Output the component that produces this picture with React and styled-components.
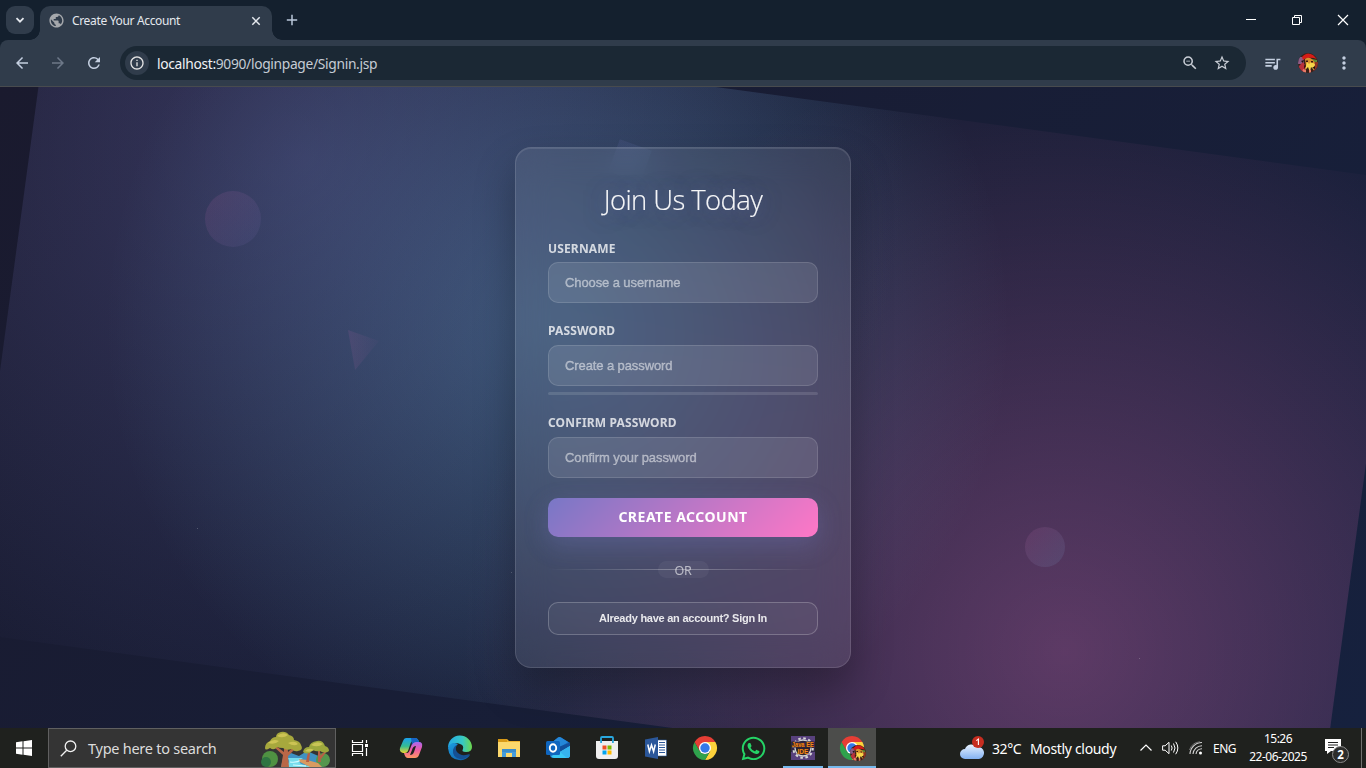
import React from 'react';
import styled, { createGlobalStyle } from 'styled-components';
import { MdArrowBack, MdArrowForward, MdRefresh, MdZoomOut, MdStarBorder, MdQueueMusic, MdMoreVert, MdPublic, MdInfoOutline } from 'react-icons/md';
import { FaWhatsapp } from 'react-icons/fa';

const Global = createGlobalStyle`
  * { box-sizing: border-box; }
  body { margin: 0; overflow: hidden; background: #1a1a2e; }
  svg { display: block; flex: none; overflow: visible; }
`;

const ui = `'Noto Sans', 'Open Sans', sans-serif`;

const Screen = styled.div`
  width: 1366px;
  height: 768px;
  display: flex;
  flex-direction: column;
  font-family: ${ui};
`;

/* ---------- browser ---------- */
const TabStrip = styled.div`
  height: 40px;
  background: #14202e;
  display: flex;
  align-items: center;
  padding-left: 6px;
`;
const TabSearch = styled.div`
  width: 28px;
  height: 28px;
  border-radius: 9px;
  background: #303c4b;
  display: grid;
  place-items: center;
`;
const Tab = styled.div`
  position: relative;
  align-self: flex-end;
  width: 232px;
  height: 34px;
  margin-left: 6px;
  padding: 0 10px 5px 8px;
  border-radius: 10px 10px 0 0;
  background: #303c4b;
  display: flex;
  align-items: center;
  color: #e4e8ee;
  font-size: 12px;
  &::before, &::after {
    content: '';
    position: absolute;
    bottom: 0;
    width: 10px;
    height: 10px;
  }
  &::before { left: -10px; background: radial-gradient(circle at 0 0, transparent 9.5px, #303c4b 10px); }
  &::after { right: -10px; background: radial-gradient(circle at 100% 0, transparent 9.5px, #303c4b 10px); }
`;
const TabTitle = styled.span`
  flex: 1;
  margin-left: 7px;
  letter-spacing: -0.34px;
  white-space: nowrap;
`;
const NewTab = styled.div`
  margin-left: 14px;
  flex: 1;
`;
const WindowButton = styled.div`
  width: 46px;
  height: 40px;
  display: grid;
  place-items: center;
`;
const ToolbarWrap = styled.div`
  background: #14202e;
  height: 47px;
`;
const Toolbar = styled.div`
  height: 47px;
  background: #303c4b;
  border-radius: 8px 8px 0 0;
  border-bottom: 1px solid #484b4e;
  display: flex;
  align-items: center;
  padding: 0 4px;
`;
const ToolButton = styled.div`
  width: 36px;
  height: 36px;
  display: grid;
  place-items: center;
  color: ${(p) => p.$tone || '#c4cfe0'};
`;
const Address = styled.div`
  flex: 1;
  height: 34px;
  margin: 0 8px;
  border-radius: 17px;
  background: #1b2834;
  display: flex;
  align-items: center;
  padding: 0 8px 0 5px;
`;
const SiteInfo = styled.div`
  width: 24px;
  height: 24px;
  border-radius: 50%;
  background: #303c4b;
  display: grid;
  place-items: center;
  color: #e3e3e3;
`;
const Url = styled.div`
  flex: 1;
  margin: 0 0 0 8px;
  font-size: 13.8px;
  letter-spacing: -0.32px;
  color: #c5ccd4;
  b { font-weight: 400; color: #f0f2f5; }
`;
const FieldIcon = styled.div`
  width: 32px;
  display: grid;
  place-items: center;
  color: #c9ced6;
`;

/* ---------- page ---------- */
const Page = styled.main`
  position: relative;
  height: 641px;
  overflow: hidden;
  background: linear-gradient(135deg, #1a1a2e 0%, #16213e 100%);
  display: flex;
  align-items: center;
  justify-content: center;
`;
const Glow = styled.div`
  position: absolute;
  inset: 0;
  transform: translate(1.5px, -1.3px) rotate(7.7deg);
  background:
    radial-gradient(circle at 20% 20%, rgba(120, 119, 198, 0.3) 0%, transparent 50%),
    radial-gradient(circle at 80% 80%, rgba(255, 119, 198, 0.3) 0%, transparent 50%),
    radial-gradient(circle at 40% 40%, rgba(120, 219, 255, 0.28) 0%, transparent 50%);
`;
const Shape = styled.div`
  position: absolute;
  left: ${(p) => p.$x}px;
  top: ${(p) => p.$y}px;
  width: ${(p) => p.$size}px;
  height: ${(p) => p.$size}px;
  opacity: ${(p) => p.$fade || 0.1};
  background: linear-gradient(${(p) => p.$angle || 135}deg, ${(p) => p.$from || '#ff77c6'}, ${(p) => p.$to || '#7877c6'});
  border-radius: ${(p) => (p.$round ? '50%' : '0')};
  transform: rotate(${(p) => p.$turn || 0}deg);
  clip-path: ${(p) => p.$clip || 'none'};
`;
const Speck = styled.i`
  position: absolute;
  left: ${(p) => p.$x}px;
  top: ${(p) => p.$y}px;
  width: 1px;
  height: 1px;
  background: rgba(255, 255, 255, 0.22);
`;
const Card = styled.form`
  position: relative;
  width: 336px;
  height: 521px;
  padding: 32px 32px 32px;
  border: 1px solid rgba(255, 255, 255, 0.12);
  border-radius: 16px;
  background: rgba(255, 255, 255, 0.08);
  backdrop-filter: blur(16px);
  box-shadow: 0 20px 40px rgba(0, 0, 0, 0.3), inset 0 1px 0 rgba(255, 255, 255, 0.1);
  display: flex;
  flex-direction: column;
`;
const Title = styled.h1`
  margin: 0 0 20px;
  height: 40px;
  line-height: 39px;
  text-align: center;
  font-family: 'Open Sans', 'Noto Sans', sans-serif;
  font-weight: 300;
  font-size: 27.5px;
  letter-spacing: -0.6px;
  color: rgba(255, 255, 255, 0.95);
  -webkit-text-stroke: 0.15px rgba(255, 255, 255, 0.9);
  text-shadow: 0 0 20px rgba(120, 119, 198, 0.5);
`;
const Field = styled.div`
  display: flex;
  flex-direction: column;
  gap: ${(p) => p.$gap || 7}px;
  margin-bottom: 19px;
`;
const Label = styled.label`
  height: 16px;
  line-height: 18px;
  font-size: 12px;
  font-weight: 700;
  letter-spacing: 0.15px;
  color: rgba(255, 255, 255, 0.77);
  white-space: nowrap;
`;
const Input = styled.input`
  width: 270px;
  height: 41px;
  padding: 0 16px;
  border: 1px solid rgba(255, 255, 255, 0.13);
  border-radius: 10px;
  outline: 0;
  background: rgba(255, 255, 255, 0.1);
  font: 13px 'Liberation Sans', sans-serif;
  letter-spacing: -0.1px;
  &::placeholder { color: rgba(255, 255, 255, 0.44); -webkit-text-stroke: 0.4px rgba(255, 255, 255, 0.42); }
`;
const Strength = styled.div`
  height: 3px;
  margin-top: -1px;
  border-radius: 2px;
  background: rgba(255, 255, 255, 0.12);
`;
const Submit = styled.button`
  height: 39px;
  margin: 1px 0 24px;
  padding: 0 0 2px;
  border: 0;
  border-radius: 10px;
  background: linear-gradient(135deg, #7877c6, #ff77c6);
  box-shadow: 0 8px 25px rgba(120, 119, 198, 0.3);
  color: #fff;
  font: 700 14px ${ui};
  letter-spacing: 0.5px;
`;
const Divider = styled.div`
  position: relative;
  height: 17px;
  margin-bottom: 24px;
  display: flex;
  justify-content: center;
  &::before {
    content: '';
    position: absolute;
    left: 0;
    right: 0;
    top: 8px;
    height: 1px;
    background: linear-gradient(90deg, transparent, rgba(255, 255, 255, 0.3), transparent);
  }
  span {
    width: 51px;
    height: 17px;
    line-height: 19px;
    border-radius: 9px;
    text-align: center;
    background: rgba(255, 255, 255, 0.05);
    color: rgba(255, 255, 255, 0.6);
    font-size: 12.5px;
    letter-spacing: -0.2px;
  }
`;
const SignIn = styled.button`
  height: 33px;
  padding: 0 0 1px;
  border: 1px solid rgba(255, 255, 255, 0.22);
  border-radius: 10px;
  background: rgba(255, 255, 255, 0.05);
  color: rgba(255, 255, 255, 0.88);
  font: 700 11px 'Liberation Sans', sans-serif;
  letter-spacing: -0.25px;
`;

/* ---------- taskbar ---------- */
const Taskbar = styled.footer`
  height: 40px;
  background: #1f211e;
  display: flex;
  color: #fff;
`;
const Slot = styled.div`
  position: relative;
  width: ${(p) => p.$w || 49}px;
  height: 40px;
  margin-right: ${(p) => p.$after || 0}px;
  display: grid;
  place-items: center;
  background: ${(p) => (p.$active ? '#4c4d4b' : 'transparent')};
  &::after {
    content: '';
    position: absolute;
    bottom: 0;
    left: ${(p) => (p.$active ? 0 : 5)}px;
    right: ${(p) => (p.$active ? 0 : 4)}px;
    height: 2px;
    background: ${(p) => (p.$running ? '#76b9ed' : 'transparent')};
  }
`;
const SearchBox = styled.div`
  width: 288px;
  height: 40px;
  border: 1px solid #606060;
  background: #343434;
  display: flex;
  align-items: center;
  padding: 0 4px 0 11px;
  font-size: 14.5px;
  color: #dcdcdc;
  span { flex: 1; margin-left: 11px; letter-spacing: -0.26px; white-space: nowrap; }
`;
const Spacer = styled.div`
  flex: 1;
`;
const Weather = styled.div`
  display: flex;
  align-items: center;
  width: 181px;
  font-size: 14px;
  white-space: nowrap;
  span { letter-spacing: ${(p) => p.$track}px; }
  span:nth-of-type(1) { width: 38px; margin-left: 7px; letter-spacing: -0.4px; }
`;
const Tray = styled.div`
  display: flex;
  align-items: center;
  gap: 10px;
  font-size: 12px;
  letter-spacing: -0.5px;
`;
const Clock = styled.div`
  width: 70px;
  margin-left: 7px;
  text-align: center;
  font-size: 12px;
  line-height: 18px;
  letter-spacing: -0.5px;
  padding-top: 2px;
`;
const Notices = styled.div`
  margin-left: 12px;
  width: 36px;
  padding-top: 5px;
  display: flex;
  align-items: center;
`;
const DesktopEdge = styled.div`
  width: 5px;
  border-left: 1px solid #70716f;
`;

const Pirate = ({ size }) => (
  <svg width={size} height={size} viewBox="0 0 20 20">
    <clipPath id={`p${size}`}><circle cx="10" cy="10" r="10" /></clipPath>
    <g clipPath={`url(#p${size})`}>
      <rect width="20" height="20" fill="#3a2018" />
      <path d="M0 4h6v7H0z" fill="#8b5a86" />
      <path d="M3 11l2 2-3 2zM14 6l5 1v3l-4 1z" fill="#5f8a35" />
      <path d="M1 13l4-4 3 5-2 6H0z" fill="#b9303a" />
      <path d="M14 9h6v8l-4 3z" fill="#8d3425" />
      <path d="M4 4Q9-2 15 2l4 4Q10 3 5 7z" fill="#d51c17" />
      <path d="M7 6q4-3 8 1l2 3-2 2-7 1z" fill="#d9902f" />
      <path d="M9 9l2 2 2-2 4 2-1 6-3-3-1 5-2-5-3 3z" fill="#f7d64a" />
      <path d="M8 7.500h2v1.400H8zM13 8h2v1.500h-2zM6 12l2 1-2 3z" fill="#3b1410" />
      <path d="M5 16l3 1v3H4zM11 17h2v3h-2z" fill="#e77a68" />
      <path d="M14 15l3-2v3zM3 8l3-1-1 3z" fill="#21110e" />
    </g>
  </svg>
);

const ChromeLogo = () => (
  <svg width="24" height="24" viewBox="0 0 48 48">
    <path d="M24 12h20.800A24 24 0 0 1 24 48l10.400-18z" fill="#fdd23b" />
    <path d="M3.200 12A24 24 0 0 0 24 48l10.400-18A12 12 0 0 1 13.600 30z" fill="#2fa24c" />
    <path d="M24 12h20.800A24 24 0 0 0 3.200 12l10.400 18z" fill="#e53e35" />
    <circle cx="24" cy="24" r="12" fill="#fff" />
    <circle cx="24" cy="24" r="9.400" fill="#3479e8" />
  </svg>
);

const Trees = () => (
  <svg width="70" height="38" viewBox="0 0 70 38">
    <path d="M22 29l8-5 8 3 8-5 16 7v9H20z" fill="#3f91c2" />
    <circle cx="9" cy="30" r="8" fill="#4f9142" />
    <ellipse cx="5" cy="33" rx="5" ry="5" fill="#2f7442" />
    <circle cx="62" cy="31" r="7" fill="#55964d" />
    <path d="M24 38q7-6 2-9h16q-8 5 2 7l8 2z" fill="#75dcec" />
    <path d="M29 33q7 1 11-2M32 36l13 1" stroke="#d6fbff" strokeWidth="1.200" fill="none" />
    <path d="M38 30l8 1 11 3 4 4H49l-10-5z" fill="#d89b61" />
    <path d="M20 38l2-12-9-8 2-1 8 6V12h3l1 11 8-7 1 2-9 9 1 11z" fill="#b96747" />
    <path d="M57 33V22h2l1 11zM45 33l2-10 2 1-1 9zM59 27l6-6 1 1-6 8z" fill="#b85f45" />
    <path d="M4 19q0-5 5-7 2-4 6-4 0-4 5-5 5-1 8 3 5 1 5 5 6 1 7 5 3 5-3 6-4 1-6-2-6 2-9-1-4 0-6-1-3 4-7 1-5 3-5 0z" fill="#a7a83d" />
    <path d="M7 14q5-5 11-2-4 4-11 2zM16 7q6-5 11-1-5 4-11 1zM27 14q7-3 10 1-4 3-10-1z" fill="#ccc354" />
    <path d="M42 23q1-5 6-5 1-5 8-6 6-1 8 5 4 1 4 5-4 3-9 0-4 1-7-1-5 6-10 2z" fill="#9da83d" />
    <path d="M50 16q6-5 12-1-5 4-12 1zM44 22q4-4 9-1-4 3-9 1z" fill="#c9c456" />
  </svg>
);

const Copilot = () => (
  <svg width="24" height="24" viewBox="0 0 24 24">
    <defs>
      <linearGradient id="ca" x2="0" y2="1"><stop stopColor="#1aa0ed" /><stop offset=".55" stopColor="#35bd91" /><stop offset="1" stopColor="#eed632" /></linearGradient>
      <linearGradient id="cb" x2="0" y2="1"><stop stopColor="#a768ef" /><stop offset=".5" stopColor="#ef5ba3" /><stop offset="1" stopColor="#ff9861" /></linearGradient>
    </defs>
    <path d="M7 2h9q3 0 4 4l1 3h-5l-2-4q-2 0-3 4l-2 6q-1 2-3 2H4q-4-1-3-5l3-7q1-3 3-3z" fill="url(#ca)" />
    <path d="M16 22H9q-3 0-4-5h3q2 0 3-4l2-5q1-2 4-2h3q4 0 3 5l-3 8q-1 3-4 3zm-3-8l-2 5q3 0 4-3l2-6q-3 0-4 4z" fill="url(#cb)" fillRule="evenodd" />
    <path d="M12 2h4q3 0 4 4h-3q-3 0-4 3z" fill="#1764c4" />
  </svg>
);

const EdgeLogo = () => (
  <svg width="24" height="24" viewBox="0 0 24 24">
    <defs>
      <linearGradient id="ea"><stop stopColor="#25a9e5" /><stop offset=".6" stopColor="#36c8c5" /><stop offset="1" stopColor="#6dd84c" /></linearGradient>
      <linearGradient id="eb" x2=".7" y2="1"><stop stopColor="#1b9de2" /><stop offset="1" stopColor="#1264ad" /></linearGradient>
    </defs>
    <path d="M0 12A12 12 0 0 1 24 11q0 5-6 5-5 0-3-3 1-4-3-5Q5 5 0 12z" fill="url(#ea)" />
    <path d="M0 12Q3 5 10 8q-4 3-2 9 3 6 14 2-4 6-11 5Q1 23 0 12z" fill="url(#eb)" />
    <path d="M10 8q-4 4-1 8 4 5 13 2-4 6-10 5-8-2-7-9 1-4 5-6z" fill="#155093" />
  </svg>
);

const Explorer = () => (
  <svg width="22" height="20" viewBox="0 0 22 20">
    <path d="M0 1h9l2 2h11v16H0z" fill="#eeb32f" />
    <path d="M0 1h9v3H0z" fill="#d89a17" />
    <path d="M0 4h22v15H0z" fill="#fbd86c" />
    <path d="M4 19v-8h14v8h-4v-4H8v4z" fill="#459ddb" />
    <path d="M4 11h14v3H4z" fill="#388ccc" />
  </svg>
);

const Outlook = () => (
  <svg width="24" height="24" viewBox="0 0 24 24">
    <path d="M4 8l8-6.500q1.500-1 3 0L24 7v12q0 3-3 3H7q-3 0-3-3z" fill="#176bc0" />
    <path d="M7 5.500l5-4q1.500-1 3 0l7 4.500-9 6z" fill="#2487d8" />
    <path d="M10 12L24 6.500v5L12 19z" fill="#114f9b" />
    <path d="M24 10v9q0 3-3 3H8q-2 0-3-2l7-3z" fill="#3ac8f5" />
    <path d="M14 16l10-6v9q0 3-3 3z" fill="#36b3ed" />
    <rect y="5" width="14" height="14" rx="1.500" fill="#0f66bf" />
    <ellipse cx="7" cy="12" rx="3.200" ry="3.700" fill="none" stroke="#fff" strokeWidth="1.900" />
  </svg>
);

const Store = () => (
  <svg width="24" height="24" viewBox="0 0 24 24">
    <path d="M6 7V2q0-1 1-1h10q1 0 1 1v5" fill="none" stroke="#29a8df" strokeWidth="1.800" />
    <path d="M1 5h22v15q0 3-3 3H4q-3 0-3-3z" fill="#efefef" />
    <path d="M5.200 5H7v2H5.200zM17 5h1.800v2H17z" fill="#29a8df" />
    <path d="M7.500 9.500h4v4h-4z" fill="#f25022" /><path d="M12.500 9.500h4v4h-4z" fill="#7fba00" />
    <path d="M7.500 14.500h4v4h-4z" fill="#00a4ef" /><path d="M12.500 14.500h4v4h-4z" fill="#ffb900" />
  </svg>
);

const Word = () => (
  <svg width="22" height="22" viewBox="0 0 22 22">
    <path d="M12 3h9.500v16H12z" fill="#fff" stroke="#2a579a" strokeWidth=".6" />
    <path d="M14 5.500h6M14 8h6M14 10.500h6M14 13h6M14 15.500h6" stroke="#2a579a" />
    <path d="M0 2.500L13 0v22L0 19.500z" fill="#2b579a" />
    <path d="M2.800 7.500l1.600 7L6.500 8l2.100 6.500 1.700-7" fill="none" stroke="#fff" strokeWidth="1.500" />
  </svg>
);

const IdeText = styled.text`
  font: 700 7px 'Liberation Sans', sans-serif;
  fill: #f28a1c;
  stroke: #4a220c;
  stroke-width: 0.7px;
  paint-order: stroke;
`;
const JavaIde = () => (
  <svg width="24" height="24" viewBox="0 0 24 24">
    <rect width="24" height="24" fill="#58417d" />
    <rect y="8" width="24" height="8" fill="#302747" />
    <circle cx="12" cy="12" r="9.800" fill="none" stroke="#d8d8d8" strokeWidth="2" strokeDasharray="2.600 2.530" />
    <circle cx="12" cy="12" r="8" fill="#272236" stroke="#d0d0d0" strokeWidth="1.400" />
    <rect y="5.500" width="24" height="6" fill="#302747" />
    <IdeText x="0.800" y="11" textLength="22" lengthAdjust="spacingAndGlyphs">Java EE</IdeText>
    <IdeText x="6.500" y="17.500" textLength="11" lengthAdjust="spacingAndGlyphs">IDE</IdeText>
  </svg>
);

const AvatarBadge = styled.div`
  position: absolute;
  left: 22px;
  top: 17px;
`;

const CloudIcon = () => (
  <svg width="26" height="26" viewBox="0 0 26 26">
    <defs><linearGradient id="cl" x2="0" y2="1"><stop stopColor="#e9f3ff" /><stop offset="1" stopColor="#83b1f2" /></linearGradient></defs>
    <path d="M6 24a5 5 0 0 1 0-10 7 7 0 0 1 12-2 6 6 0 0 1 2 12z" fill="url(#cl)" />
    <circle cx="19" cy="7" r="6" fill="#c62d20" />
    <path d="M17.300 5.600L19.400 4v6" stroke="#fff" strokeWidth="1.100" fill="none" />
  </svg>
);

const NoticeText = styled.text`
  font: 700 11.5px 'Noto Sans', sans-serif;
  fill: #fff;
  text-anchor: middle;
`;

export default function App() {
  return (
    <Screen>
      <Global />
      <TabStrip>
        <TabSearch>
          <svg width="10" height="10" viewBox="0 0 10 10"><path d="M1.500 3.200L5 6.700l3.500-3.500" stroke="#e4e8ee" strokeWidth="1.800" fill="none" /></svg>
        </TabSearch>
        <Tab>
          <MdPublic size={17} color="#a5a8ac" />
          <TabTitle>Create Your Account</TabTitle>
          <svg width="12" height="12" viewBox="0 0 12 12"><path d="M2.300 2.300l7.400 7.400M9.700 2.300l-7.400 7.400" stroke="#e4e8ee" strokeWidth="1.500" /></svg>
        </Tab>
        <NewTab>
          <svg width="12" height="12" viewBox="0 0 12 12"><path d="M6 .8v10.400M.8 6h10.400" stroke="#b9c6da" strokeWidth="1.500" /></svg>
        </NewTab>
        <WindowButton><svg width="10" height="10"><path d="M0 4.500h10" stroke="#fff" /></svg></WindowButton>
        <WindowButton><svg width="10" height="10"><path d="M.5 2.500h7v7h-7zM2.500 2.500v-2h7v7h-2" stroke="#fff" fill="none" /></svg></WindowButton>
        <WindowButton><svg width="10" height="10"><path d="M0 0l10 10M10 0L0 10" stroke="#fff" strokeWidth="1.200" /></svg></WindowButton>
      </TabStrip>
      <ToolbarWrap>
        <Toolbar>
          <ToolButton><MdArrowBack size={18} /></ToolButton>
          <ToolButton $tone="#6d7888"><MdArrowForward size={18} /></ToolButton>
          <ToolButton><MdRefresh size={18} /></ToolButton>
          <Address>
            <SiteInfo><MdInfoOutline size={16} /></SiteInfo>
            <Url><b>localhost:</b>9090/loginpage/Signin.jsp</Url>
            <FieldIcon><MdZoomOut size={18} /></FieldIcon>
            <FieldIcon><MdStarBorder size={18} /></FieldIcon>
          </Address>
          <ToolButton><MdQueueMusic size={19} /></ToolButton>
          <ToolButton><Pirate size={20} /></ToolButton>
          <ToolButton><MdMoreVert size={20} /></ToolButton>
        </Toolbar>
      </ToolbarWrap>

      <Page>
        <Glow />
        <Shape $x={205} $y={103.5} $size={56} $round />
        <Shape $x={1025} $y={440} $size={40} $round $to="#78dbff" />
        <Shape $x={345} $y={243} $size={42} $clip="polygon(7% 0, 81% 26%, 24% 95%)" $angle={90} $to="rgba(120, 119, 198, 0)" />
        <Shape $x={613} $y={57} $size={34} $turn={20} $fade={0.12} $from="#7877c6" $to="#78b4e6" />
        <Speck $x={197} $y={441} />
        <Speck $x={511} $y={485} />
        <Speck $x={1139} $y={571} />
        <Card onSubmit={(e) => e.preventDefault()}>
          <Title>Join Us Today</Title>
          <Field $gap={6}>
            <Label>USERNAME</Label>
            <Input placeholder="Choose a username" />
          </Field>
          <Field>
            <Label>PASSWORD</Label>
            <Input placeholder="Create a password" />
            <Strength />
          </Field>
          <Field>
            <Label>CONFIRM PASSWORD</Label>
            <Input placeholder="Confirm your password" />
          </Field>
          <Submit>CREATE ACCOUNT</Submit>
          <Divider><span>OR</span></Divider>
          <SignIn type="button">Already have an account? Sign In</SignIn>
        </Card>
      </Page>

      <Taskbar>
        <Slot $w={48}>
          <svg width="16" height="16" viewBox="0 0 16 16"><path d="M0 2.200L6.500 1.300v6.200H0zM7.500 1.200L16 0v7.500H7.500zM0 8.500h6.500v6.200L0 13.800zM7.500 8.500H16V16l-8.500-1.200z" fill="#fff" /></svg>
        </Slot>
        <SearchBox>
          <svg width="17" height="17" viewBox="0 0 17 17"><circle cx="10.500" cy="6.300" r="5.300" stroke="#f1f1f1" strokeWidth="1.300" fill="none" /><path d="M6.700 10.200L.8 16.200" stroke="#f1f1f1" strokeWidth="1.300" /></svg>
          <span>Type here to search</span>
          <Trees />
        </SearchBox>
        <Slot $w={48} $after={2}>
          <svg width="18" height="16" viewBox="0 0 18 16"><path d="M1.500 0v2.500h10V0M1.500 16v-2.500h10V16M1.500 4.500h10v7h-10zM15.500 0v3M15.500 8v8" stroke="#fff" strokeWidth="1.200" fill="none" /><path d="M14 4h3v3h-3z" fill="#fff" /></svg>
        </Slot>
        <Slot><Copilot /></Slot>
        <Slot><EdgeLogo /></Slot>
        <Slot><Explorer /></Slot>
        <Slot><Outlook /></Slot>
        <Slot><Store /></Slot>
        <Slot><Word /></Slot>
        <Slot><ChromeLogo /></Slot>
        <Slot><FaWhatsapp size={27} color="#25d366" /></Slot>
        <Slot $running $after={1}><JavaIde /></Slot>
        <Slot $w={48} $active $running>
          <ChromeLogo />
          <AvatarBadge><Pirate size={16} /></AvatarBadge>
        </Slot>
        <Spacer />
        <Weather $track={-0.33}>
          <CloudIcon />
          <span>32°C</span>
          <span>Mostly cloudy</span>
        </Weather>
        <Tray>
          <svg width="12" height="8" viewBox="0 0 12 8"><path d="M.5 6.500L6 1l5.500 5.500" stroke="#fff" strokeWidth="1.200" fill="none" /></svg>
          <svg width="17" height="14" viewBox="0 0 17 14"><path d="M.6 4.800h2.500L7 1.300v11.400L3.100 9.200H.6z" stroke="#fff" fill="none" /><path d="M9.300 4.500q1.600 2.500 0 5M11.500 2.500q3 4.500 0 9M13.700 .8q4.300 6.200 0 12.400" stroke="#fff" fill="none" /></svg>
          <svg width="14" height="14" viewBox="0 0 14 14"><path d="M1 13A12 12 0 0 1 13 1.500M4 13A9 9 0 0 1 13 4.700M7 13A6 6 0 0 1 13 7.700" stroke="#d5d5d5" strokeWidth="1.100" fill="none" /><path d="M.5 9A12 12 0 0 1 11 .8" stroke="#777" fill="none" /><circle cx="11.500" cy="12" r="1.500" fill="#fff" /></svg>
          <span>ENG</span>
        </Tray>
        <Clock>15:26<br />22-06-2025</Clock>
        <Notices>
          <svg width="25" height="26" viewBox="0 0 25 26">
            <path d="M0 1h16v12H6l-4 3v-3H0z" fill="#fff" />
            <path d="M3 4.500h10M3 7h10M3 9.500h6" stroke="#222" />
            <circle cx="15.500" cy="16.500" r="8" fill="#2c2d2b" stroke="#8b8b8b" />
            <NoticeText x="15.500" y="20.500">2</NoticeText>
          </svg>
        </Notices>
        <DesktopEdge />
      </Taskbar>
    </Screen>
  );
}
